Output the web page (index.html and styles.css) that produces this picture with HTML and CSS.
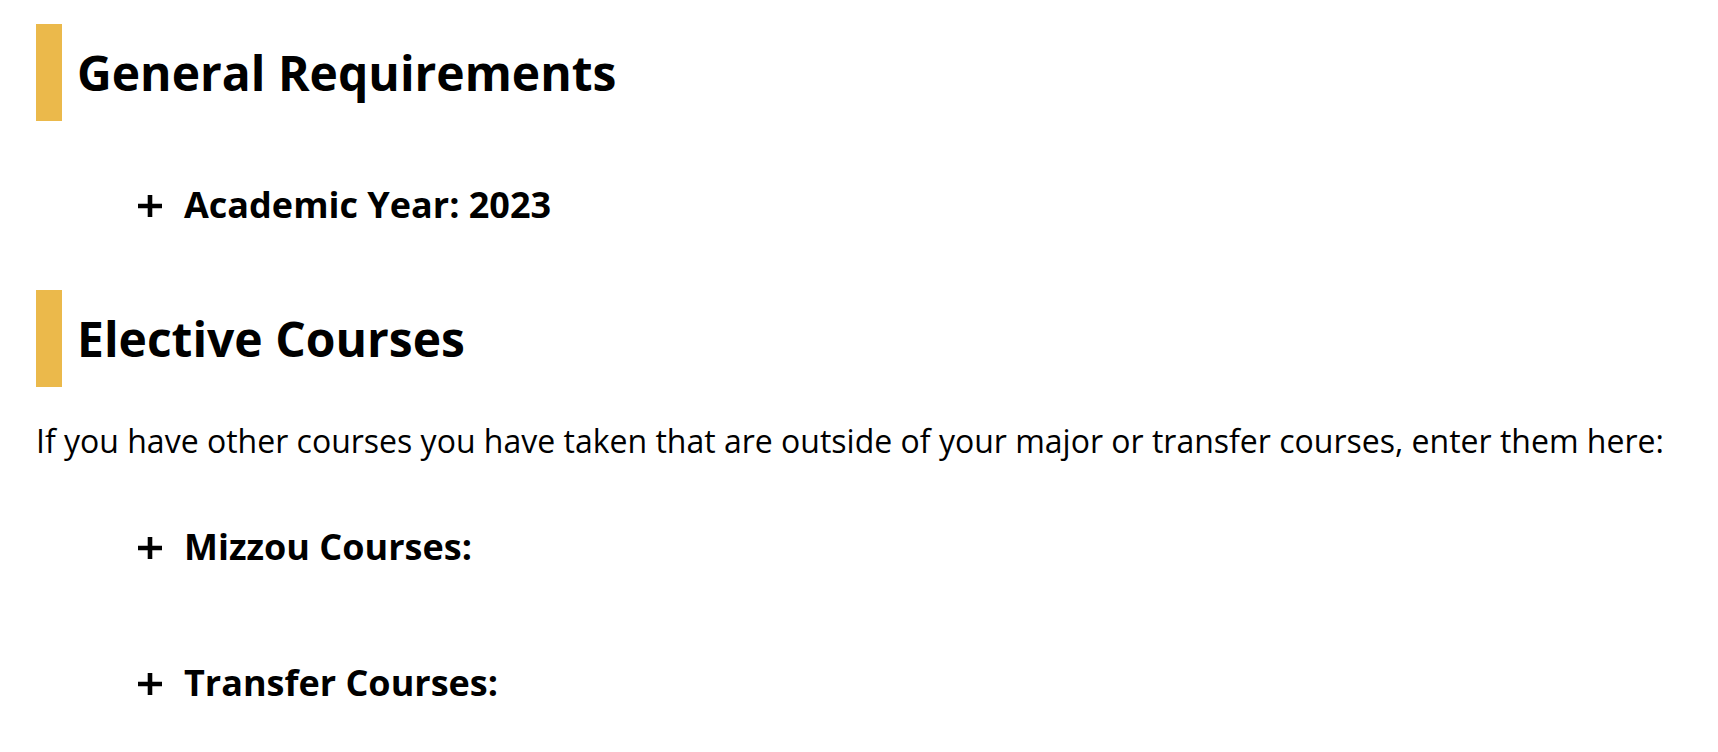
FILE: index.html
```html
<!DOCTYPE html>
<html lang="en">
<head>
<meta charset="utf-8">
<title>Requirements</title>
<link rel="stylesheet" href="styles.css">
</head>
<body>
<main class="page">
  <section class="section">
    <h2 class="section-title">General Requirements</h2>
    <div class="toggle toggle-first">
      <svg class="toggle-icon" viewBox="0 0 24 22" aria-hidden="true"><path d="M12 0v22M0 11h24" stroke="#000" stroke-width="4.6" fill="none"/></svg>
      <span class="toggle-label">Academic Year: 2023</span>
    </div>
  </section>
  <section class="section section-electives">
    <h2 class="section-title">Elective Courses</h2>
    <p class="intro">If you have other courses you have taken that are outside of your major or transfer courses, enter them here:</p>
    <div class="toggle toggle-mizzou">
      <svg class="toggle-icon" viewBox="0 0 24 22" aria-hidden="true"><path d="M12 0v22M0 11h24" stroke="#000" stroke-width="4.6" fill="none"/></svg>
      <span class="toggle-label">Mizzou Courses:</span>
    </div>
    <div class="toggle toggle-transfer">
      <svg class="toggle-icon" viewBox="0 0 24 22" aria-hidden="true"><path d="M12 0v22M0 11h24" stroke="#000" stroke-width="4.6" fill="none"/></svg>
      <span class="toggle-label">Transfer Courses:</span>
    </div>
  </section>
</main>
</body>
</html>
```

FILE: styles.css
```css
html, body {
  margin: 0;
  padding: 0;
  background: #ffffff;
}

body {
  font-family: "Open Sans", "Liberation Sans", sans-serif;
  color: #000000;
}

.page {
  padding: 24px 36px 0;
}

.section-title {
  margin: 0;
  font-size: 48px;
  font-weight: 700;
  line-height: 97px;
  border-left: 26px solid #ebb94b;
  padding-left: 15px;
}

.section-electives {
  margin-top: 61px;
}

.toggle {
  display: flex;
  align-items: center;
  gap: 22px;
  font-size: 36px;
  font-weight: 700;
  line-height: 49px;
  padding-left: 102px;
}

.toggle-icon {
  display: block;
  width: 24px;
  height: 22px;
  flex: none;
  margin-top: 2px;
}

.toggle-first {
  margin-top: 59px;
}

.intro {
  margin: 32px 0 0;
  font-size: 32px;
  line-height: 44px;
  font-weight: 400;
}

.toggle-mizzou {
  margin-top: 59px;
}

.toggle-transfer {
  margin-top: 87px;
}
```
